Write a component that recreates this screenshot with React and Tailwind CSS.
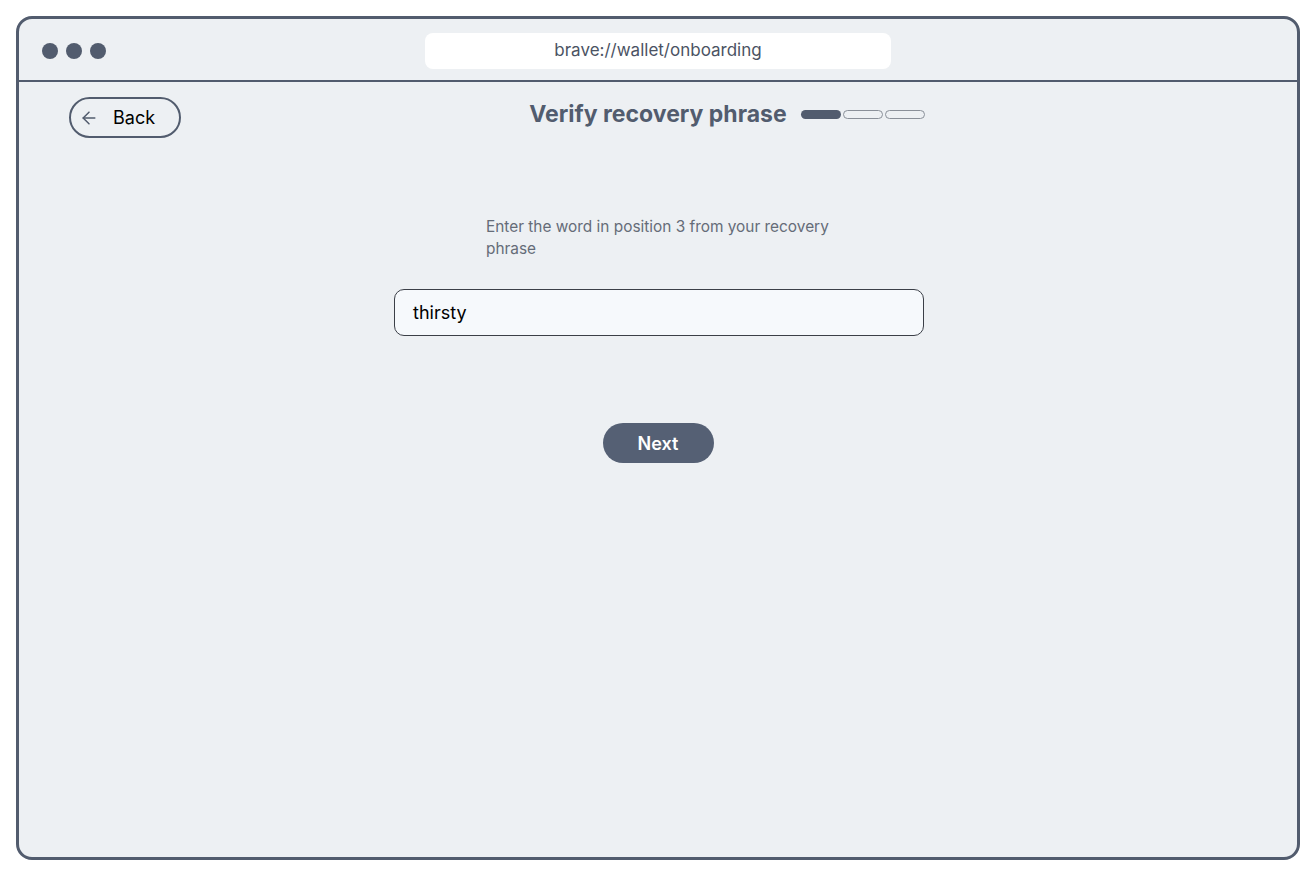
import { ArrowLeft } from "lucide-react";

const steps = [true, false, false];

export default function App() {
  return (
    <div className="h-[876px] w-[1316px] bg-white p-4 font-['Inter',sans-serif]">
      <div className="flex h-[844px] flex-col overflow-hidden rounded-[16px] border-[3px] border-[#525c6e] bg-[#edf0f3]">
        <div className="flex h-[63px] items-center border-b-2 border-[#525c6e] px-[23px] pt-[2px]">
          <div className="flex gap-2">
            <span className="h-4 w-4 rounded-full bg-[#525c6e]" />
            <span className="h-4 w-4 rounded-full bg-[#525c6e]" />
            <span className="h-4 w-4 rounded-full bg-[#525c6e]" />
          </div>
          <div className="ml-[319px] flex h-9 w-[466px] items-center justify-center rounded-lg bg-white text-[17px] text-[#4b5363]">
            brave://wallet/onboarding
          </div>
        </div>

        <div className="grid grid-cols-[1fr_auto_1fr] items-start px-[50px] pt-[15px]">
          <button className="flex h-[41px] w-[112px] items-center gap-[14px] rounded-full border-2 border-[#525c6e] pl-[8px] text-[18px] text-black">
            <ArrowLeft className="h-5 w-5 text-[#525c6e]" strokeWidth={1.8} />
            Back
          </button>
          <h1 className="pt-[1px] text-[23px] leading-8 font-bold text-[#525c6e]">Verify recovery phrase</h1>
          <div className="ml-[14px] flex h-8 items-center gap-[2px] pt-[2px]">
            {steps.map((on, i) => (
              <span
                key={i}
                className={on ? "h-[9px] w-10 rounded-full bg-[#525c6e]" : "h-[9px] w-10 rounded-full border border-[#8a9099]"}
              />
            ))}
          </div>
        </div>

        <div className="mt-[78px] flex flex-col items-center">
          <p className="w-[350px] pl-[3px] text-[15.4px] leading-[22px] text-[#656c78]">
            Enter the word in position 3 from your recovery phrase
          </p>
          <div className="mt-[29px] ml-[2px] flex h-[47px] w-[530px] items-center rounded-[10px] border border-[#3b3f47] bg-[#f6f9fc] px-[18px] text-[18px] text-black">
            thirsty
          </div>
          <button className="mt-[87px] h-10 w-[111px] rounded-full bg-[#556074] text-[18px] font-semibold text-white">
            Next
          </button>
        </div>
      </div>
    </div>
  );
}
